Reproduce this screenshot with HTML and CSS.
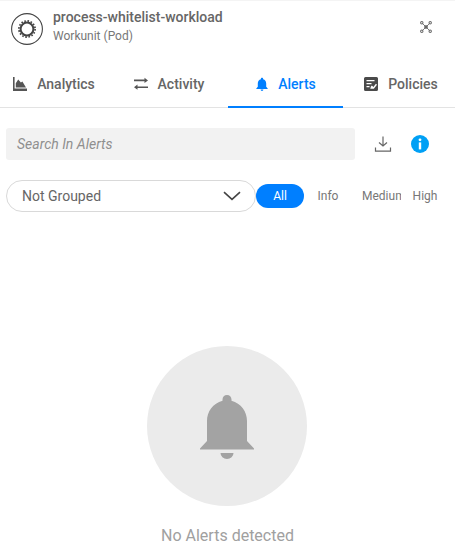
FILE: index.html
```html
<!DOCTYPE html>
<html lang="en">
<head>
<meta charset="utf-8">
<title>Alerts</title>
<link rel="stylesheet" href="styles.css">
</head>
<body>
<header class="header">
  <div class="entity-icon">
    <svg viewBox="0 0 32 32" width="32" height="32" aria-hidden="true">
      <circle cx="16" cy="16" r="15.4" fill="none" stroke="#444" stroke-width="1.1"/>
      <circle cx="16" cy="16" r="6.4" fill="none" stroke="#444" stroke-width="2"/>
      <circle cx="16" cy="16" r="8.1" fill="none" stroke="#444" stroke-width="1.7" stroke-dasharray="1.6 1.6"/>
    </svg>
  </div>
  <div class="entity-text">
    <div class="entity-name">process-whitelist-workload</div>
    <div class="entity-type">Workunit (Pod)</div>
  </div>
  <svg class="topology" viewBox="0 0 14 14" width="12" height="12" aria-hidden="true">
    <path d="M2.3 2.3 11.700 11.700M11.700 2.300 2.300 11.700" stroke="#666" stroke-width="1"/>
    <rect x="5" y="5" width="4" height="4" fill="#666"/>
    <g fill="#fff" stroke="#666" stroke-width="1.200">
      <circle cx="2.100" cy="2.100" r="1.400"/><circle cx="11.900" cy="2.100" r="1.400"/>
      <circle cx="2.100" cy="11.900" r="1.400"/><circle cx="11.900" cy="11.900" r="1.400"/>
    </g>
  </svg>
</header>

<nav class="tabs">
  <div class="tab tab-narrow">
    <svg viewBox="0 0 16 16" width="16" height="16" aria-hidden="true"><path d="M1 1h1.600v11.600H15V15H1z" fill="#555"/><path d="M3.800 11.400V7.200L6.200 3.400l2.700 3.200 1.500-1.200 3.600 6z" fill="#555"/></svg>
    <span>Analytics</span>
  </div>
  <div class="tab tab-narrow">
    <svg viewBox="0 0 16 16" width="16" height="16" aria-hidden="true"><path d="M1 3.600h10.500V1.800L15 4.400 11.500 7V5.200H1zM15 10.400H4.500V8.600L1 11.200l3.500 2.600V12H15z" fill="#555"/></svg>
    <span>Activity</span>
  </div>
  <div class="tab tab-active">
    <svg viewBox="0 0 16 16" width="14" height="16" aria-hidden="true"><path d="M8 .8c.8 0 1.300.6 1.300 1.300v.5c2.200.6 3.500 2.500 3.500 4.800v3.700L14.500 13v.6h-13V13l1.700-1.900V7.400c0-2.300 1.300-4.200 3.500-4.800v-.5C6.700 1.400 7.200.8 8 .8zM6.400 14.400h3.200A1.600 1.600 0 0 1 8 16a1.600 1.600 0 0 1-1.600-1.600z" fill="#007fff"/></svg>
    <span>Alerts</span>
  </div>
  <div class="tab">
    <svg viewBox="0 0 16 16" width="16" height="16" aria-hidden="true"><path fill-rule="evenodd" d="M2.500 1h11A1.500 1.500 0 0 1 15 2.500v11a1.500 1.500 0 0 1-1.500 1.500h-11A1.500 1.500 0 0 1 1 13.500v-11A1.500 1.500 0 0 1 2.500 1zM3.500 4v1.300h8V4zm0 3v1.300h5V7zm0 3v1.300h3V10zm3.800 2.700 3 0 .5 0 3.200-4-1.100-.9-2.500 3.100-1.500-1.400-1 1.100z" fill="#4a4a4a"/></svg>
    <span>Policies</span>
  </div>
</nav>

<section class="search-row">
  <div class="search">Search In Alerts</div>
  <svg class="download" viewBox="0 0 18 18" width="18" height="18" aria-hidden="true"><path d="M9 1.500v9.500M5 7.500 9 11 13 7.500M1.500 12.500v3.600h15v-3.600" fill="none" stroke="#666" stroke-width="1.200"/></svg>
  <svg class="info" viewBox="0 0 18 18" width="18" height="18" aria-hidden="true"><circle cx="9" cy="9" r="9" fill="#00a0f5"/><rect x="7.800" y="7.400" width="2.400" height="7" fill="#fff"/><circle cx="9" cy="4.800" r="1.400" fill="#fff"/></svg>
</section>

<section class="filter-row">
  <div class="select">
    <span>Not Grouped</span>
    <svg viewBox="0 0 18 10" width="18" height="10" aria-hidden="true"><path d="M1 1.200 9 8.400 17 1.200" fill="none" stroke="#444" stroke-width="1.600"/></svg>
  </div>
  <div class="levels">
    <span class="level level-active">All</span>
    <span class="level">Info</span>
    <span class="level level-clip">Medium</span>
    <span class="level">High</span>
  </div>
</section>

<main class="empty">
  <div class="empty-circle">
    <svg class="empty-bell" viewBox="0 0 54 64" width="54" height="64" aria-hidden="true"><path d="M27 0c2.700 0 4.500 2 4.500 4.500v1.300C41 8.300 47 16.600 47 26v20l7 7.500V54.500H0v-1L7 46V26C7 16.600 13 8.300 22.500 5.800V4.500C22.500 2 24.300 0 27 0zM20.500 58h13a6.500 6 0 0 1-13 0z" fill="#a3a3a3"/></svg>
  </div>
  <p class="empty-text">No Alerts detected</p>
</main>
</body>
</html>
```
FILE: styles.css
```css
* { box-sizing: border-box; }
html, body { margin: 0; padding: 0; }
body {
  width: 455px;
  height: 552px;
  overflow: hidden;
  background: #fff;
  font-family: Roboto, "Liberation Sans", sans-serif;
  color: #666;
}
.header {
  display: flex;
  align-items: center;
  height: 60px;
  padding: 0 23px 0 11px;
  border-top: 1px solid #f4f4f4;
}
.entity-icon { width: 32px; height: 32px; display: flex; margin-top: -4px; }
.entity-text { flex: 1; margin-left: 10px; margin-top: -8px; }
.entity-name { font-size: 14px; font-weight: 500; line-height: 18px; color: #666; }
.entity-type { font-size: 12px; line-height: 18px; margin-top: 1px; color: #777; }
.topology { margin-top: -7px; }
.tabs {
  display: flex;
  height: 48px;
  margin-left: -2px;
  width: 457px;
  border-bottom: 1px solid #e3e3e3;
}
.tab {
  flex: 0 0 115px;
  display: flex;
  align-items: center;
  justify-content: center;
  gap: 9px;
  font-size: 14px;
  font-weight: 500;
  color: #666;
  height: 48px;
  padding-top: 2px;
  border-bottom: 2px solid transparent;
}
.tab-narrow { padding-right: 4px; }
.tab-active { color: #007fff; border-bottom-color: #007fff; }
.search-row {
  display: flex;
  align-items: center;
  margin-top: 20px;
  padding-left: 6px;
}
.search {
  flex: none;
  width: 349px;
  height: 32px;
  background: #f2f2f2;
  border-radius: 3px;
  padding-left: 11px;
  font-size: 14px;
  font-style: italic;
  line-height: 32px;
  color: #8f8f8f;
}
.download { margin-left: 19px; }
.info { margin-left: 19px; }
.filter-row {
  display: flex;
  align-items: center;
  margin-top: 20px;
  padding-left: 6px;
}
.select {
  flex: none;
  width: 250px;
  height: 32px;
  display: flex;
  align-items: center;
  justify-content: space-between;
  padding: 0 14px 0 15px;
  border: 1px solid #d9d9d9;
  border-radius: 16px;
  font-size: 14px;
  color: #666;
}
.levels { display: flex; align-items: center; }
.level {
  width: 48px;
  height: 24px;
  border-radius: 12px;
  text-align: center;
  font-size: 12px;
  line-height: 24px;
  color: #777;
  flex: none;
}
.level-active { background: #007fff; color: #fff; }
.level-clip { width: 49px; padding-left: 10px; overflow: hidden; text-align: left; white-space: nowrap; border-radius: 0; }
.empty {
  display: flex;
  flex-direction: column;
  align-items: center;
  margin-top: 134px;
  padding-right: 1px;
}
.empty-circle {
  width: 160px;
  height: 160px;
  border-radius: 50%;
  background: #ebebeb;
  display: flex;
  align-items: center;
  justify-content: center;
  padding-top: 2px;
}
.empty-text {
  margin: 20px 0 0 1px;
  font-size: 16px;
  line-height: 20px;
  color: #a0a0a0;
}
```
